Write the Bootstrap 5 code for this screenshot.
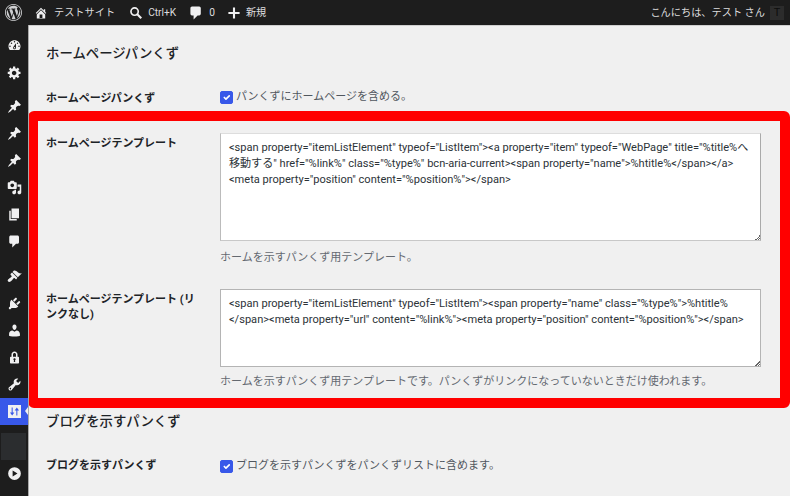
<!DOCTYPE html>
<html lang="ja">
<head>
<meta charset="utf-8">
<title>パンくず設定</title>
<link rel="stylesheet" href="https://cdn.jsdelivr.net/npm/bootstrap@5.3.0/dist/css/bootstrap.min.css">
<style>
html,body{height:100%;overflow:hidden}
body{font-family:Roboto,"Noto Sans CJK JP",sans-serif;font-size:11px;background:#f0f0f0;color:#1d2327;line-height:16px}
.topbar{height:25px;background:#1d1d1d;color:#dcdcde;font-size:10.2px;box-shadow:0 1px 0 #cfcfcf}
.topitem{gap:6px;white-space:nowrap;margin-right:14px}
.topitem svg{fill:#f0f0f1;display:block}
.ic-logo{width:17px;height:17px;margin-left:5px;margin-right:12px}
.ic-top{width:14px;height:14px}
.searchitem{gap:5px}
.ic-wide{width:16px;height:16px;margin-left:-2px;margin-right:-1px}
.lastitem{margin-left:-2px;gap:5px}
.greet{margin-right:5px}
.avatar{width:14px;height:14px;background:#2c2c2c;color:#0c0c0c;font-size:11px;margin-right:6px}
.shell{height:471px}
.sidebar{width:29px;background:#1d1d1d;border-right:1px solid #a9a9a9;padding-top:7px;flex:none;position:relative}
.sideitem{height:27px;width:28px}
.sideitem svg{width:15px;height:15px;fill:#f0f0f1}
.sp7{margin-top:7px}
.sp8{margin-top:8px}
.sideitem.active{background:#3858e9;position:relative}
.sideitem.active::after{content:"";position:absolute;right:0;top:9px;border-style:solid;border-color:transparent #f0f0f0 transparent transparent;border-width:4px 3px 4px 0}
.active svg{width:13px;height:13px}
.blockdim{width:25px;height:27px;margin:8px 0 0 1px;background:#2b2d2f}
.mainpane{min-width:0;flex:1}
.sect-title{font-size:13.4px;font-weight:500;line-height:20px;margin:0;padding-left:17px;color:#1d2327}
.t1{padding-top:19px}
.rowline{display:flex}
.lab{width:174px;flex:none;font-weight:700;font-size:11px;line-height:15px;padding-right:24px}
.fieldcol{width:541px;flex:none}
.plain{padding:26px 0 0 17px;height:40px}
.plain .lab{padding-top:1px}
.chk{display:flex;align-items:center;gap:3px;color:#50575e;font-size:11px}
.chk .form-check-input{width:13px;height:13px;margin:0;border-radius:2px;background-color:#3858e9;border-color:#3858e9;flex:none}
.frame{border:10px solid #f00;border-radius:6px;margin:7px 0 0 -1px;padding:12px 19px 0 8px;height:297px}
.frame .lab{padding-top:3px}
.areatxt.form-control{height:108px;border:1px solid #bbb;border-color:#ddd #aaa #c8c8c8 #bbb;border-radius:0;background:#fff;padding:6px 8px;font-size:11.07px;line-height:16px;color:#2c3338;font-family:Roboto,"Noto Sans CJK JP",sans-serif;box-shadow:none;resize:both}
.areatxt.short{height:78px;border-color:#b4b4b4}
.areatxt::-webkit-resizer{background:linear-gradient(135deg,transparent 50%,#666 50%,#666 62%,transparent 62%,transparent 76%,#666 76%,#666 88%,transparent 88%) no-repeat right bottom/5px 5px}
.hint{color:#646970;font-size:11px;line-height:16px;margin-top:9px}
.second{margin-top:23px}
.second .hint{margin-top:7px}
.t2{padding-top:4px}
.plain2{padding:26px 0 0 17px}
</style>
</head>
<body>
<header class="topbar d-flex align-items-center">
  <svg class="ic-logo d-block" viewBox="0 0 20 20" fill="#cfd0d2"><path d="M20 10c0-5.52-4.48-10-10-10S0 4.48 0 10s4.48 10 10 10 10-4.48 10-10zM10 1.01c4.97 0 8.99 4.02 8.99 8.99s-4.02 8.99-8.99 8.99S1.01 14.97 1.01 10 5.03 1.01 10 1.01zM8.01 14.82L4.96 6.61c.49-.03 1.05-.08 1.05-.08.43-.05.38-1.01-.06-.99 0 0-1.29.1-2.13.1-.15 0-.33 0-.52-.01 1.44-2.17 3.9-3.6 6.7-3.6 2.09 0 3.99.79 5.41 2.09-.6-.08-1.45.35-1.45 1.42 0 .66.38 1.22.79 1.88.31.54.5 1.22.5 2.21 0 1.34-1.27 4.48-1.27 4.48l-2.71-7.5c.48-.03.75-.16.75-.16.43-.05.38-1.1-.05-1.08 0 0-1.3.11-2.14.11-.78 0-2.11-.11-2.11-.11-.43-.02-.48 1.06-.05 1.08l.84.08 1.12 3.04zm6.02 2.15L16.64 10s.67-1.69.39-3.81c.63 1.14.94 2.42.94 3.81 0 2.96-1.56 5.58-3.94 6.97zM2.68 6.77L6.5 17.25c-2.67-1.3-4.47-4.08-4.47-7.25 0-1.16.2-2.23.65-3.23zm7.45 4.53l2.29 6.25c-.75.27-1.57.42-2.42.42-.72 0-1.41-.11-2.06-.3z"/></svg>
  <div class="d-flex topitem align-items-center"><svg class="ic-top" viewBox="0 0 20 20"><path d="M16 8.5l1.53 1.53-1.06 1.06L10 4.62l-6.47 6.47-1.06-1.06L10 2.5l4 4v-2h2v4zm-6-2.46l6 5.99V18H4v-5.97zM12 17v-5H8v5h4z"/></svg><span>テストサイト</span></div>
  <div class="d-flex topitem searchitem align-items-center"><svg class="ic-top" viewBox="0 0 20 20"><circle cx="8" cy="8" r="5.2" fill="none" stroke="#f0f0f1" stroke-width="2.4"/><path d="M11.5 11.5l6 6" stroke="#f0f0f1" stroke-width="3"/></svg><span>Ctrl+K</span></div>
  <div class="d-flex topitem align-items-center"><svg class="ic-wide" viewBox="0 0 20 20"><path d="M5 2h9c1.1 0 2 .9 2 2v7c0 1.1-.9 2-2 2h-2l-5 5v-5H5c-1.1 0-2-.9-2-2V4c0-1.1.9-2 2-2z"/></svg><span>0</span></div>
  <div class="d-flex topitem lastitem align-items-center"><svg class="ic-top" viewBox="0 0 20 20"><path d="M18 8.500v3h-6.500V18h-3v-6.500H2v-3h6.500V2h3v6.500z"/></svg><span>新規</span></div>
  <div class="ms-auto greet">こんにちは、テスト さん</div>
  <div class="avatar d-flex align-items-center justify-content-center">T</div>
</header>
<div class="shell d-flex">
  <nav class="sidebar">
    <div class="sideitem d-flex align-items-center justify-content-center"><svg viewBox="0 0 20 20"><path d="M3.76 16h12.48c1.1-1.37 1.76-3.11 1.76-5 0-4.42-3.58-8-8-8s-8 3.58-8 8c0 1.89.66 3.63 1.76 5zM10 4c.55 0 1 .45 1 1s-.45 1-1 1-1-.45-1-1 .45-1 1-1zM6 6c.55 0 1 .45 1 1s-.45 1-1 1-1-.45-1-1 .45-1 1-1zm8 0c.55 0 1 .45 1 1s-.45 1-1 1-1-.45-1-1 .45-1 1-1zm-5.37 5.55L12 7v6c0 1.1-.9 2-2 2s-2-.9-2-2c0-.57.24-1.08.63-1.45zM4 10c.55 0 1 .45 1 1s-.45 1-1 1-1-.45-1-1 .45-1 1-1zm12 0c.55 0 1 .45 1 1s-.45 1-1 1-1-.45-1-1 .45-1 1-1zm-5 3c0-.55-.45-1-1-1s-1 .45-1 1 .45 1 1 1 1-.45 1-1z" fill-rule="evenodd"/></svg></div>
    <div class="sideitem d-flex align-items-center justify-content-center"><svg viewBox="0 0 20 20"><path d="M18 12h-2.18c-.17.7-.44 1.35-.81 1.93l1.54 1.54-2.1 2.1-1.54-1.54c-.58.36-1.23.63-1.91.79V19H8v-2.18c-.68-.16-1.33-.43-1.91-.79l-1.54 1.54-2.12-2.12 1.54-1.54c-.36-.58-.63-1.23-.79-1.91H1V9.03h2.17c.16-.7.44-1.35.8-1.94L2.43 5.55l2.1-2.1 1.54 1.54c.58-.37 1.24-.64 1.93-.81V2h3v2.18c.68.16 1.33.43 1.91.79l1.54-1.54 2.12 2.12-1.54 1.54c.36.59.64 1.24.8 1.94H18V12zm-8.5 1.5c1.66 0 3-1.34 3-3s-1.34-3-3-3-3 1.34-3 3 1.34 3 3 3z"/></svg></div>
    <div class="sideitem sp7 d-flex align-items-center justify-content-center"><svg viewBox="0 0 20 20"><path d="M10.44 3.02l1.82-1.82 6.36 6.35-1.83 1.82c-1.05-.68-2.48-.57-3.41.36l-.75.75c-.92.93-1.04 2.35-.35 3.41l-1.83 1.82-2.41-2.41-2.8 2.79c-.42.42-3.38 2.71-3.8 2.29s1.86-3.39 2.28-3.81l2.79-2.79L4.1 9.36l1.83-1.82c1.05.69 2.48.57 3.4-.36l.75-.75c.93-.92 1.05-2.35.36-3.41z"/></svg></div>
    <div class="sideitem d-flex align-items-center justify-content-center"><svg viewBox="0 0 20 20"><path d="M10.44 3.02l1.82-1.82 6.36 6.35-1.83 1.82c-1.05-.68-2.48-.57-3.41.36l-.75.75c-.92.93-1.04 2.35-.35 3.41l-1.83 1.82-2.41-2.41-2.8 2.79c-.42.42-3.38 2.71-3.8 2.29s1.86-3.39 2.28-3.81l2.79-2.79L4.1 9.36l1.83-1.82c1.05.69 2.48.57 3.4-.36l.75-.75c.93-.92 1.05-2.35.36-3.41z"/></svg></div>
    <div class="sideitem d-flex align-items-center justify-content-center"><svg viewBox="0 0 20 20"><path d="M10.44 3.02l1.82-1.82 6.36 6.35-1.83 1.82c-1.05-.68-2.48-.57-3.41.36l-.75.75c-.92.93-1.04 2.35-.35 3.41l-1.83 1.82-2.41-2.41-2.8 2.79c-.42.42-3.38 2.71-3.8 2.29s1.86-3.39 2.28-3.81l2.79-2.79L4.1 9.36l1.83-1.82c1.05.69 2.48.57 3.4-.36l.75-.75c.93-.92 1.05-2.35.36-3.41z"/></svg></div>
    <div class="sideitem d-flex align-items-center justify-content-center"><svg viewBox="0 0 20 20"><path d="M13 11V4c0-.55-.45-1-1-1h-1.67L9 1H5L3.67 3H2c-.55 0-1 .45-1 1v7c0 .55.45 1 1 1h10c.55 0 1-.45 1-1zM7 4.500c1.38 0 2.5 1.12 2.500 2.500S8.380 9.500 7 9.500 4.500 8.380 4.500 7 5.620 4.500 7 4.500zM14 6h5v10.500c0 1.380-1.120 2.500-2.500 2.500S14 17.880 14 16.500s1.120-2.500 2.500-2.500c.17 0 .34.02.5.05V9h-3V6zm-4 8.050V13h2v3.500c0 1.380-1.120 2.500-2.500 2.500S7 17.880 7 16.500 8.120 14 9.500 14c.17 0 .34.02.5.05z" fill-rule="evenodd"/></svg></div>
    <div class="sideitem d-flex align-items-center justify-content-center"><svg viewBox="0 0 20 20"><path d="M6 15V2h10v13H6zm-1 1h8v2H3V5h2v11z"/></svg></div>
    <div class="sideitem d-flex align-items-center justify-content-center"><svg viewBox="0 0 20 20"><path d="M5 2h9c1.100 0 2 .9 2 2v7c0 1.100-.9 2-2 2h-2l-5 5v-5H5c-1.100 0-2-.9-2-2V4c0-1.100.9-2 2-2z"/></svg></div>
    <div class="sideitem sp8 d-flex align-items-center justify-content-center"><svg viewBox="0 0 20 20"><path d="M14.480 11.060L7.410 3.990l1.500-1.500c.5-.56 2.300-.47 3.510.32 1.210.8 1.430 1.280 2.910 2.100 1.180.64 2.450 1.260 4.450.85zm-.71.71L6.700 4.700 4.930 6.470c-.39.39-.39 1.020 0 1.410l1.060 1.060c.39.39.39 1.030 0 1.420-.6.6-1.430 1.110-2.210 1.690-.35.26-.7.53-1.010.84C1.430 13.230.1 15.300 1.520 16.710c1.420 1.420 3.480.09 4.820-1.250.31-.31.58-.66.84-1.010.58-.78 1.090-1.610 1.690-2.210.39-.39 1.030-.39 1.420 0l1.060 1.060c.39.39 1.020.39 1.410 0z"/></svg></div>
    <div class="sideitem d-flex align-items-center justify-content-center"><svg viewBox="0 0 20 20"><path d="M13.110 4.360L9.870 7.600 8 5.730l3.240-3.240c.35-.34 1.050-.2 1.560.32.52.51.66 1.210.31 1.550zm-8 1.770l.91-1.120 9.010 9.010-1.190.84c-.71.71-2.630 1.160-3.820 1.160H6.140L4.900 17.260c-.59.59-1.540.59-2.120 0-.59-.58-.59-1.530 0-2.120l1.240-1.240v-3.880c0-1.130.4-3.190 1.090-3.890zm7.260 3.970l3.240-3.240c.34-.35 1.040-.21 1.550.31.52.51.66 1.210.31 1.550l-3.240 3.250z"/></svg></div>
    <div class="sideitem d-flex align-items-center justify-content-center"><svg viewBox="0 0 20 20"><path d="M10 9.250c-2.270 0-2.730-3.440-2.730-3.440C7 4.020 7.820 2 9.970 2c2.160 0 2.980 2.020 2.710 3.810 0 0-.41 3.440-2.680 3.440zm0 2.570L12.720 10c2.390 0 4.520 2.330 4.520 4.530v2.490s-3.650 1.130-7.240 1.130c-3.650 0-7.240-1.130-7.240-1.130v-2.490c0-2.250 1.940-4.480 4.470-4.480z"/></svg></div>
    <div class="sideitem d-flex align-items-center justify-content-center"><svg viewBox="0 0 20 20"><path d="M14 9h1c.55 0 1 .45 1 1v7c0 .55-.45 1-1 1H5c-.55 0-1-.45-1-1v-7c0-.55.45-1 1-1h1V6c0-2.210 1.790-4 4-4s4 1.790 4 4v3zm-2 0V6c0-1.100-.9-2-2-2s-2 .9-2 2v3h4zm-1 7l-.36-2.150c.51-.24.86-.75.86-1.350 0-.83-.67-1.500-1.500-1.500s-1.500.67-1.500 1.500c0 .6.35 1.110.86 1.350L9 16h2z"/></svg></div>
    <div class="sideitem d-flex align-items-center justify-content-center"><svg viewBox="0 0 20 20"><path d="M16.680 9.770c-1.340 1.340-3.300 1.670-4.950.99l-5.410 6.520c-.99.99-2.590.99-3.580 0s-.99-2.590 0-3.570l6.520-5.420c-.68-1.650-.35-3.610.99-4.950 1.280-1.280 3.120-1.620 4.720-1.060l-2.890 2.890 2.820 2.820 2.860-2.870c.53 1.580.18 3.390-1.080 4.650zM3.810 16.210c.4.39 1.040.39 1.430 0 .4-.4.4-1.040 0-1.430-.39-.4-1.030-.4-1.430 0-.39.39-.39 1.030 0 1.430z" fill-rule="evenodd"/></svg></div>
    <div class="sideitem active d-flex align-items-center justify-content-center"><svg viewBox="0 0 20 20"><path fill-rule="evenodd" d="M0 0h20v20H0zM5.600 4v7.500H3L6.400 16l3.400-4.500H7.200V4zm7.200 12V8.500h-2.600L13.600 4 17 8.500h-2.600V16z"/></svg></div>
    <div class="blockdim"></div>
    <div class="sideitem d-flex align-items-center justify-content-center"><svg viewBox="0 0 20 20"><path fill-rule="evenodd" d="M10 1.500a8.500 8.500 0 1 1 0 17 8.500 8.500 0 0 1 0-17zM7.500 6v8l6.500-4z"/></svg></div>
  </nav>
  <main class="mainpane">
    <h2 class="sect-title t1">ホームページパンくず</h2>
    <div class="plain rowline">
      <div class="lab">ホームページパンくず</div>
      <label class="chk"><input class="form-check-input" type="checkbox" checked>パンくずにホームページを含める。</label>
    </div>
    <section class="frame">
      <div class="rowline">
        <div class="lab">ホームページテンプレート</div>
        <div class="fieldcol">
          <textarea class="form-control areatxt">&lt;span property="itemListElement" typeof="ListItem"&gt;&lt;a property="item" typeof="WebPage" title="%title%へ移動する" href="%link%" class="%type%" bcn-aria-current&gt;&lt;span property="name"&gt;%htitle%&lt;/span&gt;&lt;/a&gt;&lt;meta property="position" content="%position%"&gt;&lt;/span&gt;</textarea>
          <div class="hint">ホームを示すパンくず用テンプレート。</div>
        </div>
      </div>
      <div class="rowline second">
        <div class="lab">ホームページテンプレート (リンクなし)</div>
        <div class="fieldcol">
          <textarea class="form-control areatxt short">&lt;span property="itemListElement" typeof="ListItem"&gt;&lt;span property="name" class="%type%"&gt;%htitle%&lt;/span&gt;&lt;meta property="url" content="%link%"&gt;&lt;meta property="position" content="%position%"&gt;&lt;/span&gt;</textarea>
          <div class="hint">ホームを示すパンくず用テンプレートです。パンくずがリンクになっていないときだけ使われます。</div>
        </div>
      </div>
    </section>
    <h2 class="sect-title t2">ブログを示すパンくず</h2>
    <div class="plain2 rowline">
      <div class="lab">ブログを示すパンくず</div>
      <label class="chk"><input class="form-check-input" type="checkbox" checked>ブログを示すパンくずをパンくずリストに含めます。</label>
    </div>
  </main>
</div>
<script src="https://cdn.jsdelivr.net/npm/bootstrap@5.3.0/dist/js/bootstrap.bundle.min.js"></script>
</body>
</html>
